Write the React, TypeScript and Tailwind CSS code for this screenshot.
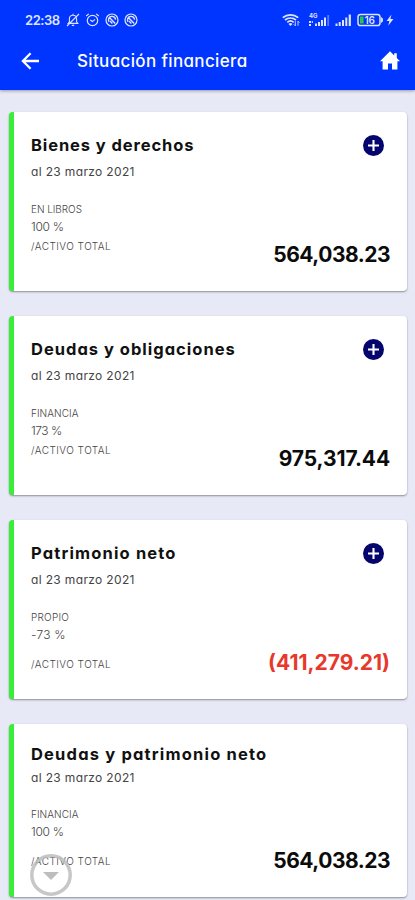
import React from "react";

interface FinanceCard {
  title: string;
  titleClass: string;
  label: string;
  labelClass: string;
  percent: string;
  percentClass: string;
  amount: string;
  amountClass: string;
  totalClass: string;
  expandable: boolean;
}

const cards: FinanceCard[] = [
  {
    title: "Bienes y derechos",
    titleClass: "tracking-[0.9px]",
    label: "EN LIBROS",
    labelClass: "tracking-[-0.05px]",
    percent: "100 %",
    percentClass: "tracking-[-0.3px]",
    amount: "564,038.23",
    amountClass: "tracking-[-0.5px] text-[#0b0b0b]",
    totalClass: "mt-px",
    expandable: true,
  },
  {
    title: "Deudas y obligaciones",
    titleClass: "tracking-[1px]",
    label: "FINANCIA",
    labelClass: "tracking-[0.05px]",
    percent: "173 %",
    percentClass: "tracking-[-0.45px]",
    amount: "975,317.44",
    amountClass: "tracking-[-0.1px] text-[#0b0b0b]",
    totalClass: "mt-px",
    expandable: true,
  },
  {
    title: "Patrimonio neto",
    titleClass: "tracking-[1.15px]",
    label: "PROPIO",
    labelClass: "tracking-[0.25px]",
    percent: "-73 %",
    percentClass: "tracking-[0.25px]",
    amount: "(411,279.21)",
    amountClass: "tracking-[0px] text-[#e8382b]",
    totalClass: "mt-[11px]",
    expandable: true,
  },
  {
    title: "Deudas y patrimonio neto",
    titleClass: "tracking-[1.18px]",
    label: "FINANCIA",
    labelClass: "tracking-[0.05px]",
    percent: "100 %",
    percentClass: "tracking-[-0.3px]",
    amount: "564,038.23",
    amountClass: "tracking-[-0.5px] text-[#0b0b0b]",
    totalClass: "mt-[11px]",
    expandable: false,
  },
];

const CompassIcon: React.FC = () => (
  <svg width="14" height="14" viewBox="0 0 14 14" fill="none" stroke="currentColor">
    <circle cx="7" cy="7" r="6" strokeWidth="1.2" />
    <path d="M3.6 8.8V6.2A3.4 3.4 0 0 1 7 3.4a3.6 3.6 0 0 1 3.6 3.2M4.4 4.6l5.8 5.8M5 8l2.4 2.4" strokeWidth="1.4" />
  </svg>
);

const StatusBar: React.FC = () => (
  <div className="flex h-[40px] items-center pl-[25px] pr-[21px] text-[#dfe5ff]">
    <span className="w-[41px] whitespace-nowrap text-[13px] font-semibold leading-4 tracking-[-0.45px]">
      22:38
    </span>
    {/* muted bell */}
    <svg width="14" height="14" viewBox="0 0 14 14" fill="none" stroke="currentColor" strokeWidth="1.1">
      <path d="M2.2 10.4h9.6l-1.2-1.6V5.8a3.6 3.6 0 0 0-7.2 0v3zM7 2.2V.8M5.8 12.4h2.4M1 13 13 1" />
    </svg>
    {/* alarm */}
    <svg className="ml-[5px]" width="15" height="14" viewBox="0 0 15 14" fill="none" stroke="currentColor" strokeWidth="1.2">
      <circle cx="7.5" cy="7.5" r="5.2" />
      <path d="M1.2 3 3.8.9M13.8 3 11.2.9M5.3 7l2.1 1.6 2.6-2.2" />
    </svg>
    <div className="ml-[5px] flex gap-[5px]">
      <CompassIcon />
      <CompassIcon />
    </div>
    <div className="ml-auto flex items-center">
      {/* wifi */}
      <svg width="18" height="14" viewBox="0 0 18 14" fill="none" stroke="currentColor" strokeWidth="1.7">
        <path d="M.8 4.6a12 12 0 0 1 15.4 0M3 7a8.6 8.6 0 0 1 11 0M5.3 9.3a5 5 0 0 1 6.4 0" />
        <path d="m6.5 11 2 2 2-2a3 3 0 0 0-4 0z" fill="currentColor" stroke="none" />
        <path d="M13.3 8.2v4.6M11.9 11.4l1.4 1.4M16 12.8V8.2l1.4 1.4" strokeWidth=".9" />
      </svg>
      {/* mobile networks */}
      <svg className="ml-[8px]" width="22" height="14" viewBox="0 0 22 14" fill="currentColor">
        <text x="1" y="5" fontSize="6" fontWeight="700">4G</text>
        <path d="M1 8h2v2H1zM1 11h2v2H1zM3.8 8h1v2h-1zM7 10.5h2V13H7zM10 9h2v4h-2zM13 7h2v6h-2zM16 4.5h2V13h-2z" />
        <path d="M19.3 2h1.8v11h-1.8z" opacity=".4" />
      </svg>
      <svg className="ml-[5px]" width="17" height="14" viewBox="0 0 17 14" fill="currentColor">
        <path d="M.5 10.5h2V13h-2zM3.7 9h2v4h-2zM7 7h2v6H7zM10.3 4.5h2V13h-2zM13.7 1.5h2.2V13h-2.2z" />
      </svg>
      {/* battery */}
      <svg className="ml-[5px]" width="28" height="14" viewBox="0 0 28 14" fill="none">
        <rect x="1" y="1.5" width="22" height="11" rx="2.6" stroke="currentColor" strokeWidth="1.5" />
        <path d="M24.6 4.6c1.2.8 1.2 4 0 4.8z" fill="currentColor" stroke="currentColor" />
        <path d="M3 3.5h3.6v7H3z" fill="#2fc34b" />
        <text x="7.4" y="10.8" fontSize="10" fontWeight="600" fill="currentColor">16</text>
      </svg>
      {/* charging */}
      <svg className="ml-px" width="8" height="12" viewBox="0 0 8 12" fill="currentColor">
        <path d="M5.4.4.6 7h2.8l-1.2 4.8L7.4 5H4.4z" />
      </svg>
    </div>
  </div>
);

const AppBar: React.FC = () => (
  <div className="flex h-[50px] items-center pl-[21px] pr-[15px] pb-[9px] text-white">
    <svg width="18" height="18" viewBox="0 0 18 18" fill="none" stroke="currentColor" strokeWidth="2.3">
      <path d="M18 9H2M9.6 1.3 1.9 9l7.7 7.7" />
    </svg>
    <h1 className="ml-[38px] whitespace-nowrap text-[17px] font-medium leading-6 tracking-[0.35px]">
      Situación financiera
    </h1>
    <svg className="ml-auto" width="20" height="19" viewBox="0 0 20 19" fill="currentColor">
      <path d="M8 18.6v-6h4v6h5.4v-8.4H20L16.8 7V2.2h-2.6v2.2L10 .2 0 10.2h2.6v8.4z" />
    </svg>
  </div>
);

const Card: React.FC<{ card: FinanceCard }> = ({ card }) => (
  <section
    className={
      card.expandable
        ? "flex h-[178.5px] justify-between rounded-[4px] border-l-[5px] border-[#38ee38] bg-white pt-[21px] pr-[17px] pb-[22px] pl-[17px] shadow-[0_1px_2px_rgba(0,0,0,0.4)]"
        : "flex h-[173px] justify-between rounded-[4px] border-l-[5px] border-[#38ee38] bg-white pt-[18px] pr-[17px] pb-[22px] pl-[17px] shadow-[0_1px_2px_rgba(0,0,0,0.4)]"
    }
  >
    <div className="w-0 whitespace-nowrap text-[#444]">
      <h2 className={`text-[16.5px] font-bold leading-6 text-[#111] ${card.titleClass}`}>{card.title}</h2>
      <p
        className={
          card.expandable
            ? "mt-[5px] text-[12px] leading-5 tracking-[0.35px]"
            : "mt-[2px] -mb-px text-[12px] leading-5 tracking-[0.35px]"
        }
      >
        al 23 marzo 2021
      </p>
      <p className={`mt-[18px] text-[10px] font-light leading-[18px] ${card.labelClass}`}>{card.label}</p>
      <p className={`text-[12px] font-light leading-[18px] ${card.percentClass}`}>{card.percent}</p>
      <p className={`text-[10px] font-light leading-[18px] tracking-[0.48px] ${card.totalClass}`}>/ACTIVO TOTAL</p>
    </div>
    <div className="flex flex-col items-end justify-between">
      {card.expandable ? (
        <svg className="mt-[2px] mr-[6.5px]" width="21" height="21" viewBox="0 0 21 21">
          <circle cx="10.5" cy="10.5" r="10.5" fill="#05056e" />
          <path d="M10.5 5v11M5 10.5h11" stroke="#fff" strokeWidth="2.1" />
        </svg>
      ) : (
        <span />
      )}
      <span className={`whitespace-nowrap text-[21px] font-bold leading-7 ${card.amountClass}`}>{card.amount}</span>
    </div>
  </section>
);

export default function App() {
  return (
    <div className="relative h-[900px] w-[415px] overflow-hidden bg-[#e7e9f6] font-['Inter','Open_Sans',sans-serif] [font-feature-settings:'cv11']">
      <header className="h-[90px] bg-[#0034ff] shadow-[0_1px_3px_rgba(0,0,0,0.35)]">
        <StatusBar />
        <AppBar />
      </header>
      <main className="flex flex-col gap-[25.5px] pt-[22px] pr-[8px] pl-[9px]">
        {cards.map((card) => (
          <Card key={card.title} card={card} />
        ))}
      </main>
      <button className="absolute top-[854px] left-[30px]" aria-label="Bajar">
        <svg width="42" height="42" viewBox="0 0 42 42">
          <circle cx="21" cy="21" r="19.2" fill="none" stroke="#bdbdbd" strokeOpacity=".85" strokeWidth="3.5" />
          <path d="M13 18h16l-8 8z" fill="#bdbdbd" />
        </svg>
      </button>
    </div>
  );
}
